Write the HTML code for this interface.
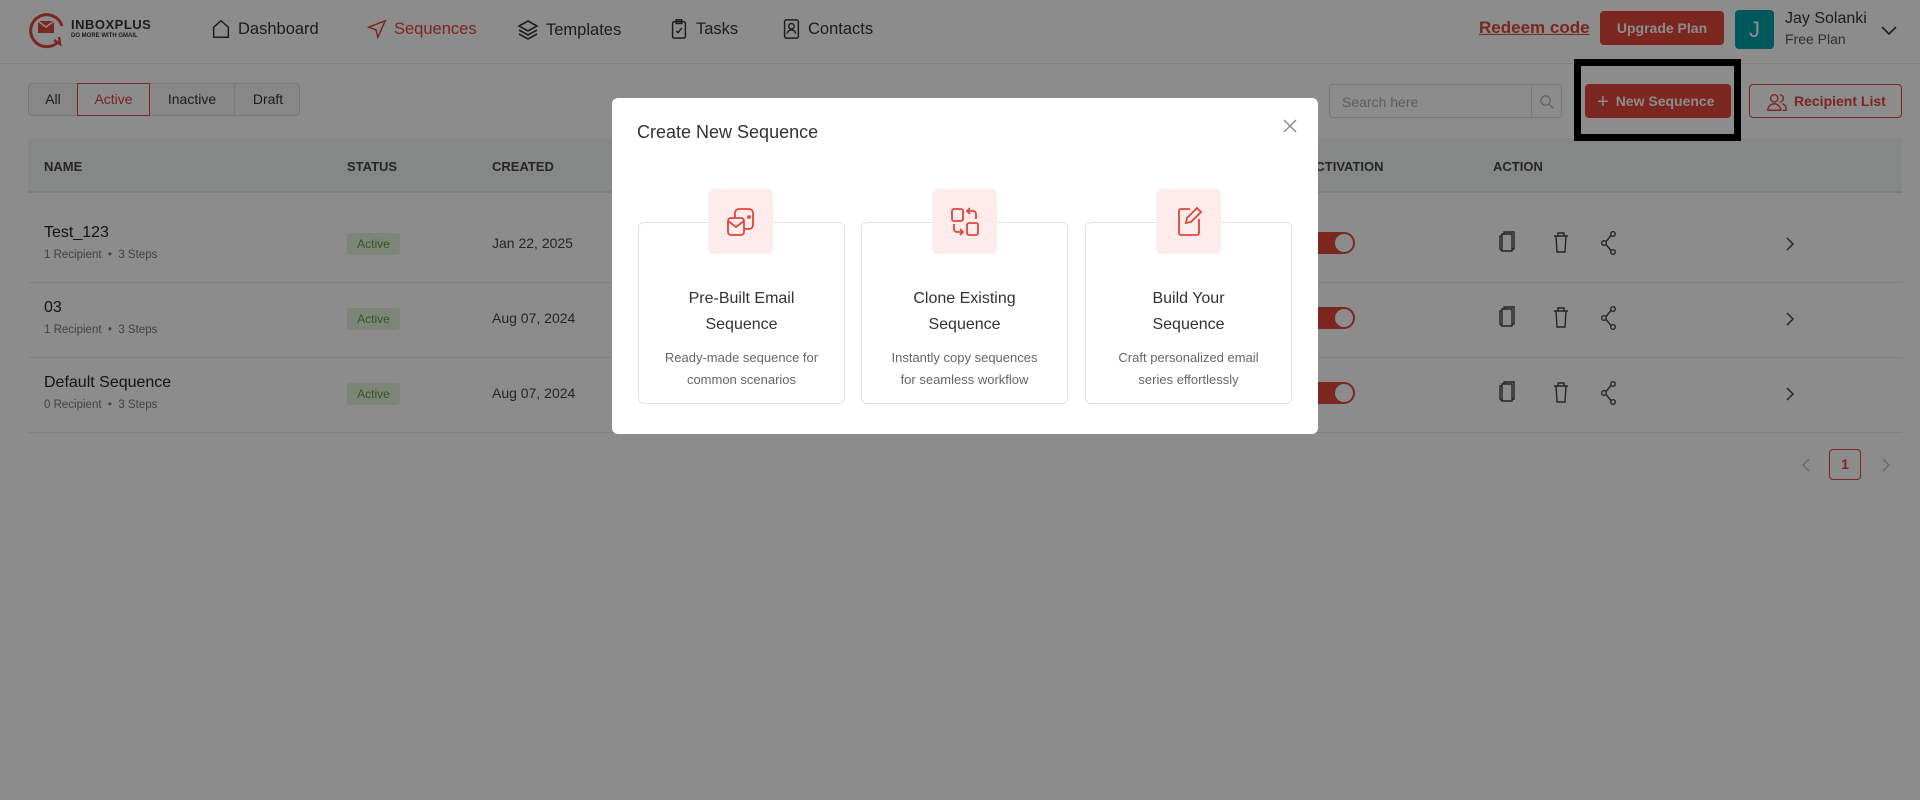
<!DOCTYPE html>
<html><head><meta charset="utf-8"><style>
*{box-sizing:border-box;margin:0;padding:0}
body{width:1920px;height:800px;position:relative;background:#fff;font-family:"Liberation Sans",sans-serif;color:#333;overflow:hidden}
.a{position:absolute}
.nav{font-size:16.5px;color:#333;display:flex;align-items:center;gap:6px}
.th{font-size:13px;font-weight:bold;color:#444;top:159px}
.nm{font-size:16px;color:#222;left:44px}
.sub{font-size:11.5px;color:#777;left:44px}
.badge{left:347px;width:53px;height:22px;background:#e4f3dc;color:#5aa337;font-size:12px;text-align:center;line-height:22px;border-radius:3px}
.dt{left:492px;font-size:14px;color:#444}
.line{left:28px;width:1874px;height:1px;background:#ececec}
.tg{left:1303px;width:52px;height:22px;background:#e0453a;border-radius:11px}
.tg:after{content:"";position:absolute;right:2px;top:2px;width:18px;height:18px;border-radius:50%;background:#fff}
.ov{position:absolute;left:0;top:0;width:1920px;height:800px;background:rgba(0,0,0,.45)}
.card{position:absolute;top:222px;width:207px;height:182px;border:1px solid #e3e3e3;border-radius:6px;text-align:center}
.ib{position:absolute;top:189px;width:65px;height:65px;background:#fdeceb;border-radius:6px;display:flex;align-items:center;justify-content:center}
.ct{position:absolute;top:63px;left:0;right:0;font-size:16px;line-height:26px;color:#333}
.cd{position:absolute;top:124px;left:0;right:0;font-size:13px;line-height:22px;color:#666}
</style></head><body>
<div class="a" style="left:0;top:63px;width:1920px;height:1px;background:#e6e6e6"></div>
<svg class="a" style="left:28px;top:6px" width="38" height="44" viewBox="0 0 38 44"><path d="M30 36 A16 16 0 1 1 34 20" fill="none" stroke="#e0453a" stroke-width="3"/><path d="M26 34l6 4-1-7" fill="none" stroke="#e0453a" stroke-width="2.5"/><rect x="10" y="15" width="16" height="12" fill="#e0453a"/><path d="M10 15l8 6 8-6" stroke="#fff" stroke-width="1.5" fill="none"/></svg>
<div class="a" style="left:71px;top:17px;font-size:13px;font-weight:bold;color:#333;letter-spacing:.5px">INBOXPLUS</div>
<div class="a" style="left:71px;top:33px;font-size:6px;color:#333;font-weight:bold">DO MORE WITH GMAIL</div>
<div class="a nav" style="left:210px;top:18px"><svg width="22" height="22" viewBox="0 0 24 24" fill="none" stroke="#333" stroke-width="1.6"><path d="M4 10l8-7 8 7v11H4z"/></svg>Dashboard</div>
<div class="a nav" style="left:366px;top:18px;color:#e0453a"><svg width="22" height="22" viewBox="0 0 24 24" fill="none" stroke="#e0453a" stroke-width="1.6"><path d="M21 3L3 10l8 3 2 8z"/></svg>Sequences</div>
<div class="a nav" style="left:516px;top:18px"><svg width="24" height="24" viewBox="0 0 24 24" fill="none" stroke="#333" stroke-width="1.6"><path d="M12 3l9 5-9 5-9-5z"/><path d="M3 12l9 5 9-5M3 16l9 5 9-5"/></svg>Templates</div>
<div class="a nav" style="left:668px;top:18px"><svg width="22" height="22" viewBox="0 0 24 24" fill="none" stroke="#333" stroke-width="1.6"><rect x="5" y="4" width="14" height="18" rx="2"/><rect x="9" y="2" width="6" height="4"/><path d="M9 14l2 2 4-5"/></svg>Tasks</div>
<div class="a nav" style="left:780px;top:18px"><svg width="22" height="22" viewBox="0 0 24 24" fill="none" stroke="#333" stroke-width="1.6"><rect x="5" y="2" width="15" height="20" rx="2"/><circle cx="12.5" cy="9" r="3"/><path d="M8 17a4.5 4 0 0 1 9 0"/></svg>Contacts</div>
<div class="a" style="left:1479px;top:18px;font-size:17px;font-weight:bold;color:#e0453a;text-decoration:underline">Redeem code</div>
<div class="a" style="left:1600px;top:11px;width:124px;height:34px;background:#e0453a;border-radius:4px;color:#fff;font-size:14px;font-weight:bold;text-align:center;line-height:34px">Upgrade Plan</div>
<div class="a" style="left:1735px;top:10px;width:39px;height:39px;background:#00a1a8;border-radius:4px;color:#fff;font-size:22px;text-align:center;line-height:39px">J</div>
<div class="a" style="left:1785px;top:10px;font-size:16px;color:#333">Jay Solanki</div>
<div class="a" style="left:1785px;top:31px;font-size:14px;color:#555">Free Plan</div>
<svg class="a" style="left:1881px;top:26px" width="16" height="10" viewBox="0 0 16 10"><path d="M1 1l7 7 7-7" fill="none" stroke="#333" stroke-width="1.6"/></svg>
<div class="a" style="left:28px;top:83px;width:272px;height:33px;border:1px solid #ddd;border-radius:4px;background:#f6f6f6;font-size:14px">
<span class="a" style="left:0;width:48px;text-align:center;line-height:31px">All</span>
<span class="a" style="left:48px;width:73px;top:-1px;height:33px;border:1px solid #e0453a;background:#fff;color:#e0453a;text-align:center;line-height:31px">Active</span>
<span class="a" style="left:121px;width:85px;text-align:center;line-height:31px;border-right:1px solid #ddd">Inactive</span>
<span class="a" style="left:206px;width:66px;text-align:center;line-height:31px">Draft</span></div>
<div class="a" style="left:1329px;top:84px;width:233px;height:34px;border:1px solid #ddd;border-radius:4px;background:#fff"><span class="a" style="left:12px;top:9px;font-size:14px;color:#aaa">Search here</span><div class="a" style="left:201px;top:0;height:32px;width:1px;background:#ddd"></div>
<svg class="a" style="left:209px;top:9px" width="15" height="15" viewBox="0 0 16 16"><circle cx="7" cy="7" r="5" fill="none" stroke="#aaa" stroke-width="1.3"/><path d="M11 11l4 4" stroke="#aaa" stroke-width="1.3"/></svg></div>
<div class="a" style="left:1585px;top:84px;width:146px;height:34px;background:#e0453a;border-radius:4px;color:#fff;font-size:14px;font-weight:bold;line-height:34px;padding-left:12px"><span style="font-size:20px;font-weight:normal;vertical-align:-2px;margin-right:7px">+</span>New Sequence</div>
<div class="a" style="left:1749px;top:84px;width:153px;height:34px;border:1px solid #e0453a;border-radius:4px;color:#e0453a;font-size:14px;font-weight:bold;line-height:32px;padding-left:44px">Recipient List
<svg class="a" style="left:16px;top:6px" width="22" height="22" viewBox="0 0 24 24" fill="none" stroke="#e0453a" stroke-width="1.5"><circle cx="9" cy="8" r="4"/><path d="M2 21a7 7 0 0 1 14 0z"/><path d="M15 4a4 4 0 0 1 0 8M18 14a6 6 0 0 1 4 7h-4"/></svg></div>
<div class="a" style="left:28px;top:138px;width:1874px;height:55px;background:#f5f6f6;border-bottom:2px solid #e2e2e2"></div>
<div class="a th" style="left:44px">NAME</div><div class="a th" style="left:347px">STATUS</div><div class="a th" style="left:492px">CREATED</div><div class="a th" style="left:1306px">ACTIVATION</div><div class="a th" style="left:1493px">ACTION</div>
<div class="a nm" style="top:224px">Test_123</div><div class="a sub" style="top:249px">1 Recipient &nbsp;•&nbsp; 3 Steps</div>
<div class="a badge" style="top:233px">Active</div><div class="a dt" style="top:235px">Jan 22, 2025</div>
<div class="a line" style="top:282px"></div>
<div class="a nm" style="top:299px">03</div><div class="a sub" style="top:324px">1 Recipient &nbsp;•&nbsp; 3 Steps</div>
<div class="a badge" style="top:308px">Active</div><div class="a dt" style="top:310px">Aug 07, 2024</div>
<div class="a line" style="top:357px"></div>
<div class="a nm" style="top:374px">Default Sequence</div><div class="a sub" style="top:399px">0 Recipient &nbsp;•&nbsp; 3 Steps</div>
<div class="a badge" style="top:383px">Active</div><div class="a dt" style="top:385px">Aug 07, 2024</div>
<div class="a line" style="top:432px"></div>
<div class="a tg" style="top:232px"></div><div class="a tg" style="top:307px"></div><div class="a tg" style="top:382px"></div>
<svg class="a" style="left:1495px;top:230px" width="140" height="180" viewBox="0 0 140 180" fill="none" stroke="#444" stroke-width="1.4">
<g id="r"><path d="M7 4h10v17h-10z M9 4V2h10v17h-2M7 21l-2-2V6h2"/><path d="M59 6h14M63 6V3h6v3M61 6l1 16h8l1-16"/><circle cx="118" cy="4" r="2.3"/><circle cx="109" cy="13" r="2.3"/><circle cx="118" cy="22" r="2.3"/><path d="M116 5.5l-5 6M111 14.5l5 6"/></g>
<use href="#r" y="75"/><use href="#r" y="150"/></svg>
<svg class="a" style="left:1785px;top:236px" width="10" height="170" viewBox="0 0 10 170" fill="none" stroke="#444" stroke-width="1.5"><path d="M2 2l6 6-6 6M2 77l6 6-6 6M2 152l6 6-6 6"/></svg>
<svg class="a" style="left:1801px;top:458px" width="90" height="14" viewBox="0 0 90 14" fill="none" stroke="#bbb" stroke-width="1.3"><path d="M8 1l-6 6 6 6M82 1l6 6-6 6"/></svg>
<div class="a" style="left:1829px;top:449px;width:32px;height:31px;border:1px solid #e0453a;border-radius:4px;color:#e0453a;font-size:14px;font-weight:bold;text-align:center;line-height:29px">1</div>
<div class="ov"></div>
<div class="a" style="left:1574px;top:59px;width:167px;height:82px;border:7px solid #000"></div>
<div class="a" style="left:612px;top:98px;width:706px;height:336px;background:#fff;border-radius:6px">
<div class="a" style="left:25px;top:24px;font-size:18px;color:#333">Create New Sequence</div>
<svg class="a" style="left:671px;top:21px" width="14" height="14" viewBox="0 0 14 14" stroke="#888" stroke-width="1.4"><path d="M1 1l12 12M13 1L1 13"/></svg>
</div>
<div class="card" style="left:638px"><div class="ct">Pre-Built Email<br>Sequence</div><div class="cd">Ready-made sequence for<br>common scenarios</div></div>
<div class="card" style="left:861px"><div class="ct">Clone Existing<br>Sequence</div><div class="cd">Instantly copy sequences<br>for seamless workflow</div></div>
<div class="card" style="left:1085px"><div class="ct">Build Your<br>Sequence</div><div class="cd">Craft personalized email<br>series effortlessly</div></div>
<div class="ib" style="left:708px"><svg width="34" height="34" viewBox="0 0 34 34" fill="none" stroke="#e0453a" stroke-width="1.8"><rect x="11" y="4" width="18" height="20" rx="4"/><rect x="4" y="13" width="16" height="17" rx="3" fill="#fdeceb"/><path d="M4 16l8 6 8-6"/><circle cx="25" cy="12" r="1"/></svg></div>
<div class="ib" style="left:932px"><svg width="34" height="34" viewBox="0 0 34 34" fill="none" stroke="#e0453a" stroke-width="1.8"><rect x="4" y="4" width="11" height="12" rx="2"/><rect x="19" y="18" width="11" height="12" rx="2"/><path d="M28 14V9a3 3 0 0 0-3-3h-5M22 3l-3 3 3 3M6 19v5a3 3 0 0 0 3 3h6M12 24l3 3-3 3"/></svg></div>
<div class="ib" style="left:1156px"><svg width="34" height="34" viewBox="0 0 34 34" fill="none" stroke="#e0453a" stroke-width="1.8"><path d="M18 4H9a2 2 0 0 0-2 2v22a2 2 0 0 0 2 2h16a2 2 0 0 0 2-2V14"/><path d="M25 3l4 4-10 10-5 1 1-5z"/></svg></div>
</body></html>
